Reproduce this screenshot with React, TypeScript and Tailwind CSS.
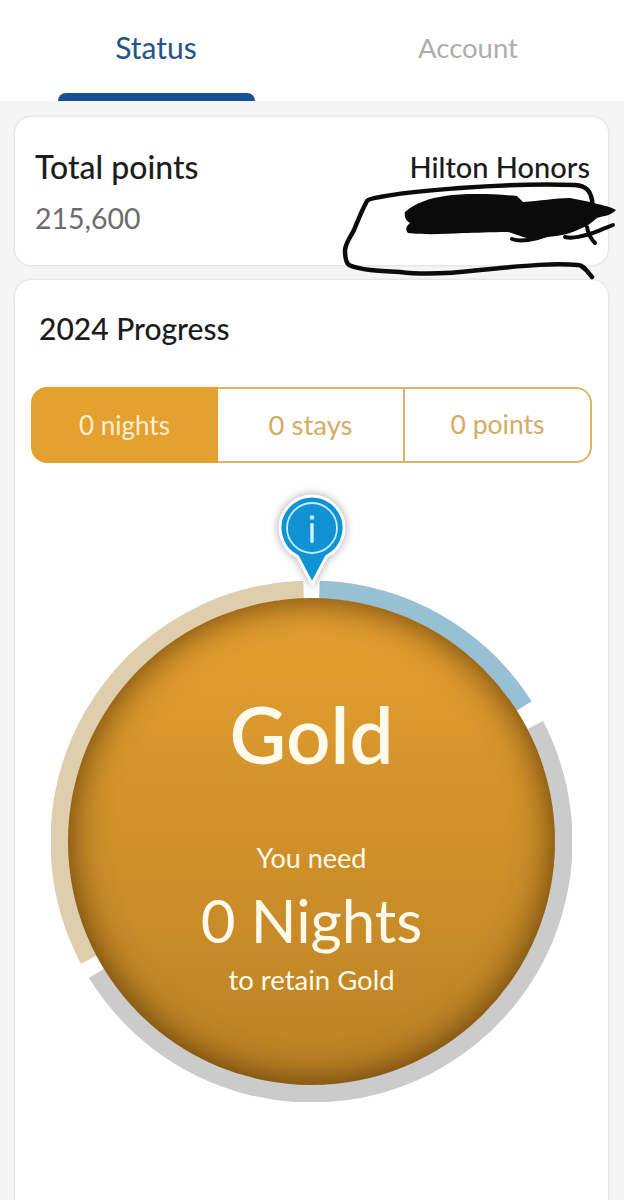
const font = { fontFamily: '"Lato", "Noto Sans", sans-serif' };

// ring geometry, angles are clockwise from 12 o'clock
const RING_CENTER = 260.5;
const RING_RADIUS = 252;

const arcs = [
  { from: 1.8, to: 57.5, color: "#97c0d5" },
  { from: 62.5, to: 238.5, color: "#cbcbcb" },
  { from: 242, to: 358.2, color: "#dfceae" },
];

function point(angle: number) {
  const rad = (angle * Math.PI) / 180;
  return `${RING_CENTER + RING_RADIUS * Math.sin(rad)} ${RING_CENTER - RING_RADIUS * Math.cos(rad)}`;
}

function arcPath(from: number, to: number) {
  const large = to - from > 180 ? 1 : 0;
  return `M${point(from)} A${RING_RADIUS} ${RING_RADIUS} 0 ${large} 1 ${point(to)}`;
}

function Scribble() {
  return (
    <svg
      className="absolute left-[330px] top-[170px] h-[120px] w-[294px]"
      viewBox="0 0 294 120"
      fill="none"
    >
      <path
        d="M262 107 C256 100 253 95 248 95 C225 93 200 95 150 100 C125 103 93 105 70 102 C48 101 30 100 19 95 C15 92 15 85 15 80 C16 72 20 68 24 60 C28 50 32 40 37 31 C38 29 44 28 50 27 C75 22 105 20 130 18 C170 15 215 14 245 15 C256 16 260 20 262 30 C263 36 263 42 263 48"
        stroke="#0b0b0b"
        strokeWidth="4.5"
        strokeLinecap="round"
      />
      <path
        d="M75 42 C85 33 100 28 115 26 C135 23 165 24 187 26 L193 32 C210 31 225 28 240 28 L260 32 C270 35 280 36 286 40 C282 45 274 46 267 48 C262 52 258 56 252 58 C240 64 230 66 217 67 C208 69 200 69 193 67 C187 65 183 63 178 62 C160 62 145 63 133 63 C115 64 95 65 78 63 C75 60 76 56 80 53 C76 51 74 47 75 42 Z"
        fill="#0b0b0b"
      />
      <path
        d="M182 69 C190 72 205 70 217 65 M235 67 C243 69 253 66 263 63 C270 60 278 57 283 55 M257 57 C258 63 260 68 265 73"
        stroke="#0b0b0b"
        strokeWidth="4"
        strokeLinecap="round"
      />
    </svg>
  );
}

function InfoPin() {
  return (
    <svg
      className="absolute left-[221px] top-[-92px] h-[100px] w-[80px] drop-shadow-[0_0_4px_rgba(0,0,0,0.35)]"
      viewBox="0 0 80 100"
    >
      <path
        d="M40 95 L25.5 67.5 A32 32 0 1 1 54.5 67.5 Z"
        fill="#1192d4"
        stroke="#ffffff"
        strokeWidth="3"
        strokeLinejoin="round"
      />
      <circle cx="40" cy="39" r="25" fill="none" stroke="#c5eefa" strokeWidth="1.8" />
      <circle cx="40" cy="28.5" r="2.2" fill="#d5f3fb" />
      <rect x="38.3" y="34" width="3.4" height="20" rx="1.4" fill="#d5f3fb" />
    </svg>
  );
}

export default function App() {
  return (
    <div className="relative h-[1200px] w-[624px] overflow-hidden bg-[#f5f5f5]" style={font}>
      {/* tabs */}
      <div className="grid h-[101px] grid-cols-2 bg-white">
        <div className="flex flex-col items-center">
          <div className="flex flex-1 items-center pt-[2px] text-[30px] text-[#235488]">Status</div>
          <div className="h-2 w-[197px] rounded-t-lg bg-[#174f92]" />
        </div>
        <div className="flex items-center justify-center pb-[5px] text-[27.5px] text-[#adadad]">Account</div>
      </div>

      <div className="flex flex-col gap-[15px] pl-[15px] pr-[16px] pt-4">
        {/* points */}
        <div className="flex h-[148px] justify-between rounded-2xl bg-white pl-5 pr-[18px] pt-[30px] shadow-[0_0_3px_rgba(0,0,0,0.18)]">
          <div>
            <div className="text-[32px] leading-[40px] font-medium text-[#1c1c1c]">Total points</div>
            <div className="mt-[11px] text-[28.5px] leading-[40px] text-[#6c6c6c]">215,600</div>
          </div>
          <div className="text-[29px] leading-[40px] font-medium text-[#1c1c1c]">Hilton Honors</div>
        </div>

        {/* progress */}
        <div className="rounded-2xl bg-white px-4 pb-40 pt-[28px] shadow-[0_0_3px_rgba(0,0,0,0.18)]">
          <div className="pl-2 text-[30px] leading-[40px] font-medium text-[#1c1c1c]">2024 Progress</div>

          <div className="mt-[39px] flex h-[76px] text-[26px] text-[#d2ad63]">
            <div className="flex w-[187px] items-center justify-center rounded-l-2xl bg-[#e5a130] text-[#fbeed5]">0 nights</div>
            <div className="flex w-[187px] items-center justify-center border-y-2 border-r-2 border-[#dcb56c] text-[27.5px]">0 stays</div>
            <div className="flex flex-1 items-center justify-center rounded-r-2xl border-y-2 border-r-2 border-[#dcb56c] text-[26.5px]">0 points</div>
          </div>

          <div className="relative mx-auto mt-[118px] h-[521px] w-[521px]">
            <svg className="absolute inset-0 h-full w-full" viewBox="0 0 521 521" fill="none">
              {arcs.map((arc) => (
                <path key={arc.color} d={arcPath(arc.from, arc.to)} stroke={arc.color} strokeWidth="18" />
              ))}
            </svg>
            <div className="absolute inset-[17px] flex flex-col items-center rounded-full bg-gradient-to-b from-[#e5a030] to-[#bb8225] text-[#fffaeb] shadow-[inset_0_0_38px_rgba(70,40,0,0.85)]">
              <div className="mt-[90px] text-[78px] leading-[92px] font-semibold">Gold</div>
              <div className="mt-[60px] text-[27px] leading-[36px]">You need</div>
              <div className="mt-[8px] text-[60px] leading-[72px]">0 Nights</div>
              <div className="mt-[6px] text-[27.5px] leading-[36px]">to retain Gold</div>
            </div>
            <InfoPin />
          </div>
        </div>
      </div>

      <Scribble />
    </div>
  );
}
